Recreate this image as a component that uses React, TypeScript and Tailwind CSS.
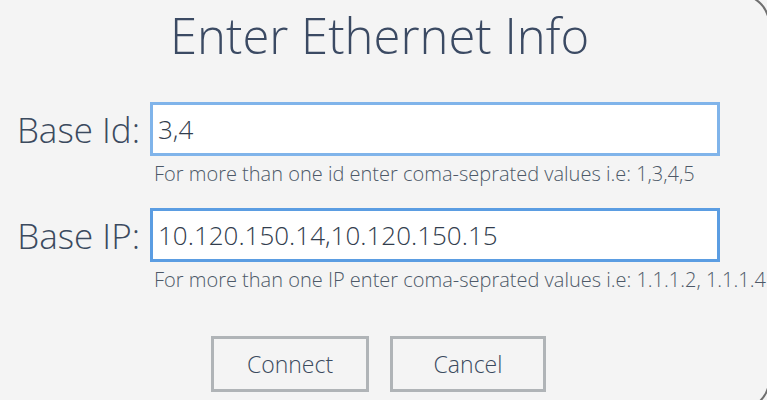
import React from 'react'

const font = { fontFamily: '"Open Sans", "Noto Sans", sans-serif' }

function Field({ label, value, hint, borderClass }: { label: string; value: string; hint: string; borderClass: string }) {
  return (
    <div>
      <div className="flex items-center">
        <label className="w-[150px] pr-[10px] text-right text-[35px] font-light text-[#3b4a5e] leading-none">{label}</label>
        <input
          readOnly
          value={value}
          className={`w-[570px] h-[54px] bg-white border-[3px] ${borderClass} pl-[5px] text-[26px] font-light text-[#323d4d] outline-none`}
          style={font}
        />
      </div>
      <p className="mt-[6px] pl-[154px] text-[20px] font-light leading-[24px] text-[#4d5968] whitespace-nowrap">{hint}</p>
    </div>
  )
}

function App() {
  return (
    <div className="w-[767px] h-[400px] overflow-hidden bg-[#f4f4f4]" style={font}>
      <div className="-mt-[6px] -ml-[30px] w-[800px] h-[416px] rounded-[30px] border-2 border-[#707070] pl-[28px] pt-[4px]">
        <h1 className="mt-[5px] h-[60px] leading-[60px] pl-[170px] text-[49px] font-light text-[#3b4a63]">Enter Ethernet Info</h1>

        <div className="mt-[37px]">
          <Field
            label="Base Id:"
            value="3,4"
            hint="For more than one id enter coma-seprated values i.e: 1,3,4,5"
            borderClass="border-[#80b4ea]"
          />
        </div>

        <div className="mt-[22px]">
          <Field
            label="Base IP:"
            value="10.120.150.14,10.120.150.15"
            hint="For more than one IP enter coma-seprated values i.e: 1.1.1.2, 1.1.1.4"
            borderClass="border-[#5b9de2]"
          />
        </div>

        <div className="mt-[44px] pl-[211px] flex gap-[21px]">
          <button className="w-[158px] h-[56px] border-[3px] border-[#b0b4b7] bg-[#f4f4f4] text-[23px] font-light text-[#3b4a5e]">Connect</button>
          <button className="w-[156px] h-[56px] border-[3px] border-[#b0b4b7] bg-[#f4f4f4] text-[23px] font-light text-[#3b4a5e]">Cancel</button>
        </div>
      </div>
    </div>
  )
}

export default App
